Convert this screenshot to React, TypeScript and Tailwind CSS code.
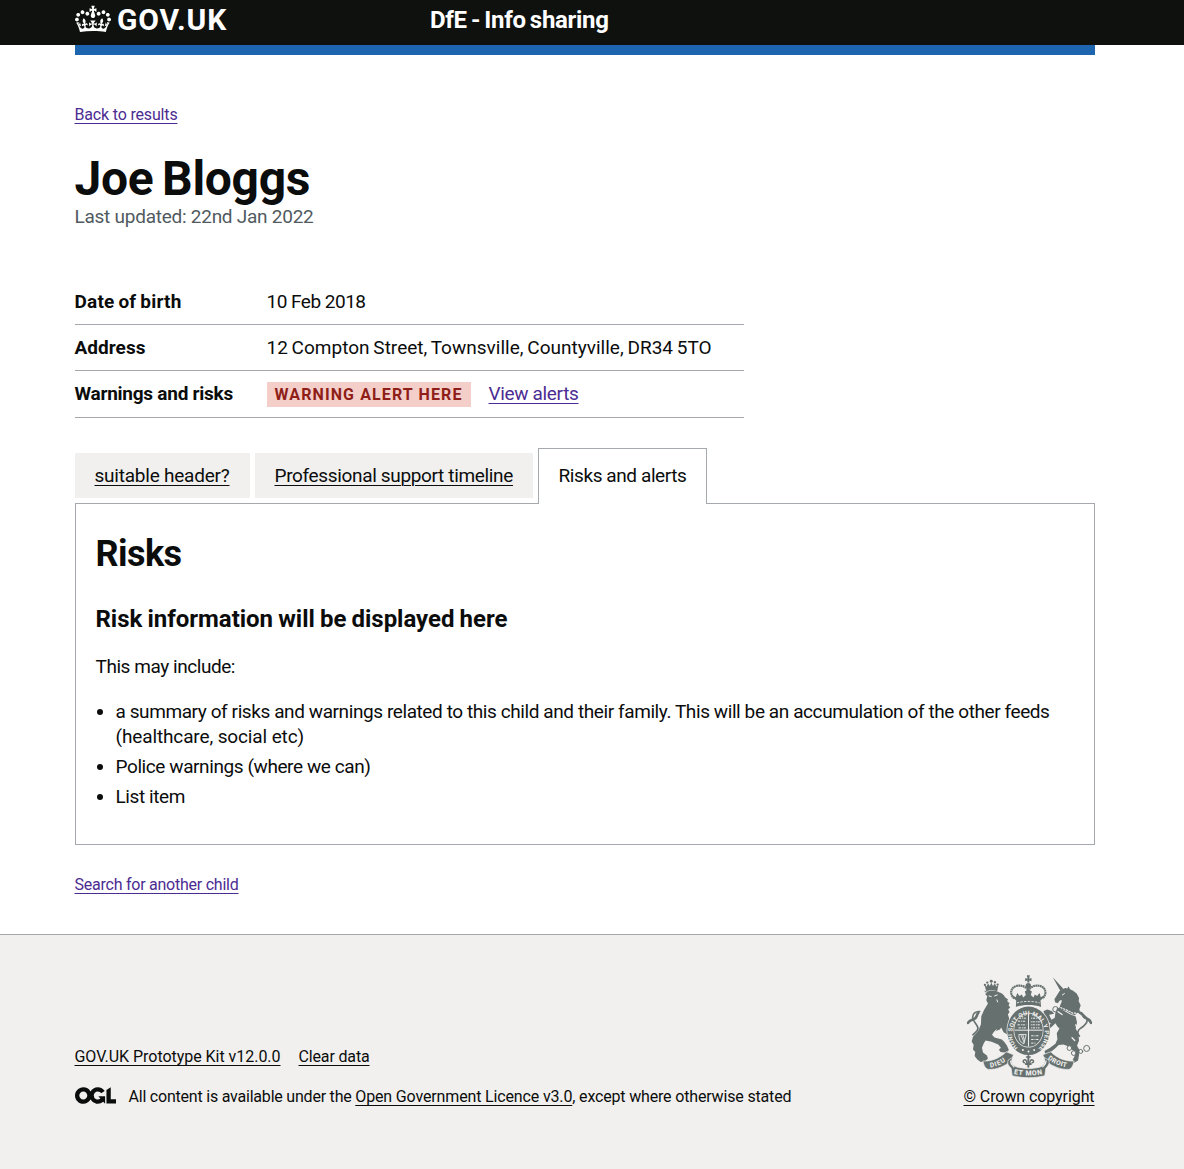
import type { ReactNode } from "react";

function Crown() {
  return (
    <svg className="h-8 w-9" viewBox="0 0 132 97" fill="currentColor" aria-hidden="true">
      <path
        fillRule="evenodd"
        d="M25 30.2c3.5 1.5 7.7-.2 9.1-3.7 1.5-3.6-.2-7.8-3.9-9.2-3.6-1.4-7.6.3-9.1 3.9-1.4 3.5.3 7.5 3.9 9zM9 39.5c3.6 1.5 7.8-.2 9.2-3.7 1.5-3.6-.2-7.8-3.9-9.1-3.6-1.5-7.6.2-9.1 3.8-1.4 3.5.3 7.5 3.8 9zM4.4 57.2c3.5 1.5 7.7-.2 9.1-3.8 1.5-3.6-.2-7.7-3.9-9.1-3.5-1.5-7.6.3-9.1 3.8-1.4 3.5.3 7.6 3.9 9.1zm38.3-21.4c3.5 1.5 7.7-.2 9.1-3.8 1.5-3.6-.2-7.7-3.9-9.1-3.6-1.5-7.6.3-9.1 3.8-1.3 3.6.4 7.7 3.9 9.1zm64.4-5.6c-3.6 1.5-7.8-.2-9.1-3.7-1.5-3.6.2-7.8 3.8-9.2 3.6-1.4 7.7.3 9.2 3.9 1.3 3.5-.4 7.5-3.9 9zm15.9 9.3c-3.6 1.5-7.7-.2-9.1-3.7-1.5-3.6.2-7.8 3.7-9.1 3.6-1.5 7.7.2 9.2 3.8 1.5 3.5-.3 7.5-3.8 9zm4.7 17.7c-3.6 1.5-7.8-.2-9.2-3.8-1.5-3.6.2-7.7 3.9-9.1 3.6-1.5 7.7.3 9.2 3.8 1.3 3.5-.4 7.6-3.9 9.1zM89.3 35.8c-3.6 1.5-7.8-.2-9.2-3.8-1.4-3.6.2-7.7 3.9-9.1 3.6-1.5 7.7.3 9.2 3.8 1.4 3.6-.3 7.7-3.9 9.1zM69.7 17.7l8.9 4.7V9.3l-8.9 2.8c-.2-.3-.5-.6-.9-.9L72.4 0H59.6l3.5 11.2c-.3.3-.6.5-.9.9l-8.8-2.8v13.1l8.8-4.7c.3.3.6.7.9.9l-5 15.4v.1c-.2.8-.4 1.6-.4 2.4 0 4.1 3.1 7.5 7 8.1h.2c.3 0 .7.1 1 .1.4 0 .7 0 1-.1h.2c4-.6 7.1-4.1 7.1-8.1 0-.8-.1-1.7-.4-2.4V34l-5.1-15.4c.4-.2.7-.6 1-.9zM66 92.8c16.9 0 32.8 1.1 47.1 3.2 4-16.9 8.9-26.7 14-33.5l-9.6-3.4c1 4.9 1.1 7.2 0 10.2-1.5-1.4-3-4.3-4.2-8.7L108.6 76c2.8-2 5-3.2 7.5-3.3-4.4 9.4-10 11.9-13.6 11.2-4.3-.8-6.3-4.6-5.6-7.9 1-4.7 5.7-5.9 8-.5 4.3-8.7-3-11.4-7.6-8.8 7.1-7.2 7.9-13.5 2.1-21.1-8 6.1-8.1 12.3-4.5 20.8-4.7-5.4-12.1-2.5-9.5 6.2 3.4-5.2 7.9-2 7.2 3.1-.6 4.3-6.4 7.8-13.5 7.2-10.3-.9-10.9-8-11.2-13.8 2.5-.5 7.1 1.8 11 7.3L80.2 60c-4.1 4.4-8 5.3-12.3 5.4 1.4-4.4 8-11.6 8-11.6H55.5s6.4 7.2 7.9 11.6c-4.2-.1-8-1-12.3-5.4l1.4 16.4c3.9-5.5 8.5-7.7 10.9-7.3-.3 5.8-.9 12.8-11.1 13.8-7.2.6-12.9-2.9-13.5-7.2-.7-5 3.8-8.3 7.1-3.1 2.7-8.7-4.6-11.6-9.4-6.2 3.7-8.5 3.6-14.7-4.6-20.8-5.8 7.6-5 13.9 2.2 21.1-4.7-2.6-11.9.1-7.7 8.8 2.3-5.5 7.1-4.2 8.1.5.7 3.3-1.3 7.1-5.7 7.9-3.5.7-9-1.8-13.5-11.2 2.5.1 4.7 1.3 7.5 3.3l-4.7-15.4c-1.2 4.4-2.7 7.2-4.3 8.7-1.1-3-.9-5.3 0-10.2l-9.5 3.4c5 6.9 9.9 16.7 14 33.5 14.8-2.1 30.8-3.2 47.7-3.2z"
      />
    </svg>
  );
}

function OglLogo() {
  return (
    <svg className="h-[17px] w-[41px]" viewBox="0 0 483.2 195.7" fill="currentColor" aria-hidden="true">
      <path d="M421.5 142.8V.1l-50.7 32.3v161.1h112.4v-50.7zm-122.3-9.6A47.12 47.12 0 0 1 221 97.8c0-26 21.1-47.1 47.1-47.1 16.7 0 31.4 8.7 39.7 21.8l42.7-27.2A97.63 97.63 0 0 0 268.1 0c-36.5 0-68.3 20.1-85.1 49.7A98 98 0 0 0 97.8 0C43.9 0 0 43.9 0 97.8s43.9 97.8 97.8 97.8c36.5 0 68.3-20.1 85.1-49.7a97.76 97.76 0 0 0 149.6 25.4l19.4 22.2h3v-87.8h-80l24.3 27.5zM97.8 145c-26 0-47.1-21.1-47.1-47.1s21.1-47.1 47.1-47.1 47.1 21.1 47.1 47.1S123.8 145 97.8 145" />
    </svg>
  );
}

/* Royal coat of arms: lion, garter with shield, unicorn and motto scroll. */
function Crest() {
  const ink = "#66706f";
  const paper = "#f1f0ee";
  return (
    <svg className="h-[103px] w-[125px]" viewBox="50 44 376 308" aria-hidden="true">
      <g fill={ink} stroke="none">
        {/* lion's crown */}
        <path d="M108 92l-5-18 6 4 4-9 6 7 4-10 5 10 6-7 4 9 6-4-3 18c-10-4-23-4-33 0z" />
        <circle cx="104" cy="73" r="3.500" /><circle cx="111" cy="66" r="3.500" /><circle cx="123" cy="62" r="4.500" />
        <circle cx="134" cy="65" r="3.500" /><circle cx="142" cy="72" r="3.500" />
        {/* lion */}
        <path d="M104 96c12-7 30-7 42-1 9 2 16 8 19 16l8 5-2 6 7 6-3 6 5 7-6 5 4 9-5 6c4 12 7 24 2 36l12 12 1 12-10-4-8 4-10-6-7-14-4 6-16 6-8 10 8 8 22 6 8 8 7 10 6 14-4 4-10 3-11-1-5-7 6-6-8-10-20-8-18-4-5 8-6 14 3 14 12 9 3 9-9 9-13 2-10-8-8-10 2-12-7-8 2-14-6-10 4-14 16-18 8-20 1-24 8-18 12-20-5-10 3-12-6-6 5-7-7-4z" />
        {/* unicorn */}
        <path d="M308 50l31 34-8 7z" />
        <path d="M328 92L336 86 346 82 352 84 355 77 360 86 368 90 380 99 387 112 386 122 392 134 388 146 391 160 382 157 374 164 362 160 350 152 340 149 326 144 332 130 336 120 330 119 323 128 315 125 313 116z" />
        <path d="M322 141L340 150 360 161 377 168 381 186 377 204 385 220 387 240 381 256 388 268 387 284 384 300 373 307 368 298 374 286 370 272 356 258 340 252 326 254 314 265 300 276 286 281 283 272 300 262 316 250 322 236 320 218 328 204 322 198 316 188 306 198 296 206 290 199 302 189 292 182 284 168 280 151 292 147 306 152 312 160 297 163 304 178 314 172 316 156z" />
      </g>
      <g fill="none" stroke={ink} strokeLinecap="round">
        <path d="M88 153c-12-1-21 6-21 17 0 14 15 21 16 33 0 9-10 14-15 20" strokeWidth="5" />
        <path d="M84 157c-6 6-3 14-12 18-6 4-13 3-19 12" strokeWidth="8" />
        <path d="M388 227c-8-9-5-18 4-24 10-7 22-15 19-26-2-9-12-15-21-19" strokeWidth="5" />
        <path d="M391 157c9 1 6 11 15 15 8 3 14 8 17 15" strokeWidth="8" />
        <circle cx="358" cy="263" r="7" strokeWidth="3" fill={paper} /><circle cx="371" cy="278" r="7" strokeWidth="3" fill={paper} />
        <circle cx="392" cy="273" r="6" strokeWidth="3" /><circle cx="410" cy="264" r="9" strokeWidth="3" />
      </g>
      <g fill="none" stroke={paper} strokeWidth="3" strokeLinecap="round">
        <path d="M116 106l7 2M133 106l8-3M140 118l2 6M138 208l-8 10M180 178l8 14" />
        <path d="M343 99l-6 4" />
        <path d="M324 137l12 6 15 6 17 9 14 0" strokeWidth="3.500" strokeDasharray="4 5" />
        <path d="M322 152l14 10M377 193l3 7M366 232l8 8" strokeWidth="4" />
      </g>
      <circle cx="316" cy="146" r="8" fill="none" stroke={ink} strokeWidth="3" />
      {/* imperial crown */}
      <g fill={ink}>
        <path d="M231 66h7l-1-6 7 2v-10l-7 2 2-10h-9l2 10-7-2v10l7-2z" />
        <circle cx="234.500" cy="75" r="8" />
        <path d="M198 120c-5-4-9-8-10-15l9 5 4-13 7 9 7-4 4 9 8-8-3-10 10.500-8 10.500 8-3 10 8 8 4-9 7 4 7-9 4 13 9-5c-1 7-5 11-10 15l2 19c-23-8-53-8-76 0z" />
      </g>
      <path d="M192 114c-14-13-12-32 6-38 16-4 30 3 36 13 7-10 21-17 36-13 18 6 21 25 7 38" fill="none" stroke={ink} strokeWidth="6.500" strokeDasharray="5.500 1.200" />
      <path d="M234.500 78v18" stroke={ink} strokeWidth="7" strokeDasharray="5 1" />
      <path d="M200 127c22-6 47-6 69 0" fill="none" stroke={paper} strokeWidth="2.500" strokeDasharray="7 4" />
      {/* garter */}
      <ellipse cx="235" cy="211" rx="66" ry="75" fill={paper} />
      <ellipse cx="235" cy="211" rx="64" ry="73" fill={ink} />
      <ellipse cx="235" cy="209" rx="45" ry="52" fill={paper} />
      <ellipse cx="235" cy="209" rx="43" ry="50" fill={ink} />
      <path id="garter" d="M203 262A49 56 0 1 1 267 262" fill="none" />
      <text fill={paper} fontFamily="Roboto, sans-serif" fontSize="18" fontWeight="700">
        <textPath href="#garter" textLength="262" lengthAdjust="spacing">HONI SOIT QUI MAL Y PENSE</textPath>
      </text>
      {/* quartered shield */}
      <g fill="none" stroke={paper}>
        <path d="M235 160v98M193 209h84" strokeWidth="3" />
        <path d="M203 182h25M202 193h26M206 173h21M205 202h22M243 226h25M243 237h22M243 248h14" strokeWidth="3" strokeDasharray="7 3 3 2" />
        <path d="M243 173h25M242 184h28M242 193h28M243 202h25" strokeWidth="3" strokeDasharray="3 2 7 3" />
        <path d="M206 222c0 15 4 24 15 28l7-28zM212 222l10 25M218 222l5 20" strokeWidth="2.500" />
      </g>
      <circle cx="218" cy="269" r="3" fill={paper} /><circle cx="235" cy="273" r="3" fill={paper} /><circle cx="252" cy="269" r="3" fill={paper} />
      {/* badge below the garter */}
      <g fill="none" stroke={ink} strokeWidth="4.500" strokeLinecap="round">
        <path d="M234.500 287v32M227 311h15" strokeWidth="6" />
        <path d="M230 312c1-10-3-16-9-13-4 3-2 8 2 8M239 312c-1-10 3-16 9-13 4 3 2 8-2 8" />
        <path d="M229 290h11" />
      </g>
      {/* motto scroll */}
      <g fill={ink} stroke={paper} strokeWidth="2" strokeLinejoin="round">
        <path d="M98 302c28 1 51-9 70-28l22 9-8 20c-20 14-42 25-68 24-9-2-14-13-16-25z" />
        <path d="M372 302c-28 1-51-9-70-28l-24 9 9 20c21 14 43 25 69 24 9-2 14-13 16-25z" />
        <path d="M187 291l-13 8c-5 14 3 17 9 25l3 22c30 8 68 8 98 0l3-22c6-8 13-13 9-25l-14-8 3 11c-2 10-7 15-15 18-22 6-48 6-70 0-8-3-16-8-16-18z" />
      </g>
      <path d="M181 302c0 8 4 11 10 17M288 302c0 8-4 11-10 17" fill="none" stroke={paper} strokeWidth="4" strokeLinecap="round" />
      <path id="motto-left" d="M120 321c18-1 34-9 53-23" fill="none" />
      <path id="motto-mid" d="M191 341c28 6 60 6 88 0" fill="none" />
      <path id="motto-right" d="M292 296c18 14 38 23 62 25" fill="none" />
      <g fill={paper} fontFamily="Roboto, sans-serif" fontSize="20" fontWeight="800">
        <text><textPath href="#motto-left" textLength="51">DIEU</textPath></text>
        <text fontSize="21"><textPath href="#motto-mid" textLength="86">ET MON</textPath></text>
        <text><textPath href="#motto-right" textLength="63">DROIT</textPath></text>
      </g>
    </svg>
  );
}

const underlined = "underline decoration-1 underline-offset-[3px]";

function SummaryRow({ label, className, children }: { label: ReactNode; className: string; children: ReactNode }) {
  return (
    <div className={`flex border-b border-[#a5a9ad] pt-[10px] ${className}`}>
      <dt className="w-48 shrink-0 font-bold">{label}</dt>
      <dd className="flex items-start">{children}</dd>
    </div>
  );
}

export default function App() {
  return (
    <div className="flex min-h-[1169px] flex-col bg-white font-[Roboto,sans-serif] text-base leading-5 whitespace-nowrap text-[#0b0c0c]">
      <header className="bg-[#0f110f] text-white">
        <div className="flex h-[45px] pl-[75px]">
          <div className="flex w-[355px] pt-[3px]">
            <Crown />
            <span className="ml-[6px] text-[30px] leading-[33px] font-bold tracking-[0.9px]">GOV.UK</span>
          </div>
          <span className="pt-[5px] text-2xl leading-[30px] font-bold tracking-[-0.3px] [word-spacing:-1.5px]">DfE - Info sharing</span>
        </div>
      </header>

      <div className="w-[1094.5px] pl-[74.5px]">
        <div className="h-[10px] bg-[#1d65ae]" />
        <a className={`mt-[50px] block w-fit tracking-[-0.168px] text-[#4c2c92] ${underlined}`}>Back to results</a>
        <h1 className="mt-[29px] text-5xl leading-[50px] font-bold tracking-[-0.3px] [word-spacing:-3px]">Joe Bloggs</h1>
        <p className="text-[19px] leading-[25px] tracking-[-0.253px] text-[#505a5f]">Last updated: 22nd Jan 2022</p>

        <dl className="mt-[50px] w-[669px] text-[19px] leading-[25px]">
          <SummaryRow className="pb-[10px]" label={<span className="tracking-[0.2px] [word-spacing:-1px]">Date of birth</span>}>
            <span className="tracking-[-0.504px]">10 Feb 2018</span>
          </SummaryRow>
          <SummaryRow className="pb-[10px]" label={<span className="tracking-[0.038px]">Address</span>}>
            <span className="tracking-[0.015px] [word-spacing:-1px]">12 Compton Street, Townsville, Countyville, DR34 5TO</span>
          </SummaryRow>
          <SummaryRow className="pb-[11px]" label={<span className="tracking-[-0.251px]">Warnings and risks</span>}>
            <strong className="mt-px -mb-px h-[25px] w-[204px] bg-[#f4cfca] px-2 text-base leading-[25px] font-bold tracking-[1.11px] text-[#8e1e17]">
              WARNING ALERT HERE
            </strong>
            <a className={`ml-[18px] tracking-[-0.341px] text-[#4c2c92] ${underlined}`}>View alerts</a>
          </SummaryRow>
        </dl>

        <nav className="mt-[30px] flex h-14 items-start gap-[5px] text-[19px] leading-[25px]">
          <a className={`mt-[5px] h-[45px] w-[175px] bg-[#f1f0ee] px-5 py-[10px] tracking-[-0.227px] ${underlined}`}>suitable header?</a>
          <a className={`mt-[5px] h-[45px] w-[278px] bg-[#f1f0ee] px-5 py-[10px] tracking-[-0.343px] ${underlined}`}>Professional support timeline</a>
          <span className="z-10 h-14 w-[169px] border border-b-0 border-[#a5a9ad] bg-white px-5 pt-[14px] tracking-[-0.406px]">Risks and alerts</span>
        </nav>
        <section className="-mt-px h-[342px] border border-[#a5a9ad] px-5 pt-[30px] text-[19px] leading-[25px]">
          <h2 className="text-4xl leading-10 font-bold tracking-[-0.563px]">Risks</h2>
          <h3 className="mt-[30px] text-2xl leading-[30px] font-bold tracking-[-0.02px] [word-spacing:-0.8px]">Risk information will be displayed here</h3>
          <p className="mt-5 tracking-[-0.444px]">This may include:</p>
          <ul className="mt-5 list-disc space-y-[5px] pl-5">
            <li>
              <span className="tracking-[-0.411px]">
                a summary of risks and warnings related to this child and their family. This will be an accumulation of the other feeds
              </span>
              <br />
              <span className="tracking-[-0.124px]">(healthcare, social etc)</span>
            </li>
            <li className="tracking-[-0.412px]">Police warnings (where we can)</li>
            <li className="tracking-[-0.408px]">List item</li>
          </ul>
        </section>
        <a className={`mt-[30px] block w-fit tracking-[-0.241px] text-[#4c2c92] ${underlined}`}>Search for another child</a>
      </div>

      <footer className="mt-[39px] flex-1 border-t border-[#a5a9ad] bg-[#f1f0ee]">
        <div className="flex w-[1094.5px] items-end justify-between pt-10 pl-[74.5px]">
          <div>
            <div className="flex gap-[18px]">
              <a className={`tracking-[-0.035px] ${underlined}`}>GOV.UK Prototype Kit v12.0.0</a>
              <a className={`tracking-[-0.155px] ${underlined}`}>Clear data</a>
            </div>
            <div className="mt-5 flex">
              <OglLogo />
              <p className="ml-[13px]">
                <span className="tracking-[-0.212px]">All content is available under the </span>
                <a className={`tracking-[-0.147px] ${underlined}`}>Open Government Licence v3.0</a>
                <span className="tracking-[-0.169px]">, except where otherwise stated</span>
              </p>
            </div>
          </div>
          <div className="flex w-[131px] flex-col items-center">
            <Crest />
            <a className={`mt-[9px] tracking-[-0.087px] ${underlined}`}>© Crown copyright</a>
          </div>
        </div>
      </footer>
    </div>
  );
}
